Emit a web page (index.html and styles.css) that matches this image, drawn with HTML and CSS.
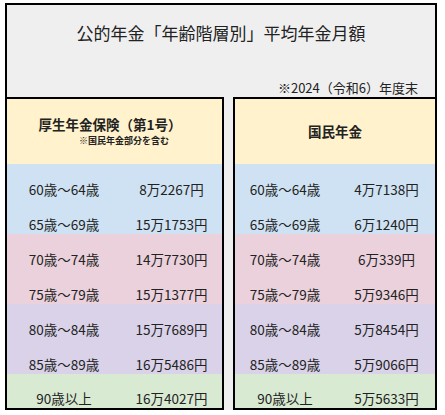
FILE: index.html
```html
<!DOCTYPE html>
<html lang="ja">
<head>
<meta charset="UTF-8">
<meta name="viewport" content="width=device-width, initial-scale=1.0">
<title>公的年金 平均年金月額</title>
<link rel="stylesheet" href="styles.css">
</head>
<body>

<div class="sheet">
    <div class="title-box">
        <h1 class="title">公的年金「年齢階層別」平均年金月額</h1>
        <p class="note">※2024（令和6）年度末</p>
    </div>

    <div class="panels">
        <div class="panel panel-left">
            <div class="head head-left">
                <div class="head-main">厚生年金保険（第1号）</div>
                <div class="head-sub">※国民年金部分を含む</div>
            </div>
            <div class="row blue"><span>60歳～64歳</span><span>8万2267円</span></div>
            <div class="row blue"><span>65歳～69歳</span><span>15万1753円</span></div>
            <div class="row pink"><span>70歳～74歳</span><span>14万7730円</span></div>
            <div class="row pink"><span>75歳～79歳</span><span>15万1377円</span></div>
            <div class="row purple"><span>80歳～84歳</span><span>15万7689円</span></div>
            <div class="row purple"><span>85歳～89歳</span><span>16万5486円</span></div>
            <div class="row green last"><span>90歳以上</span><span>16万4027円</span></div>
        </div>

        <div class="panel panel-right">
            <div class="head head-right">
                <div class="head-main">国民年金</div>
            </div>
            <div class="row blue"><span>60歳～64歳</span><span>4万7138円</span></div>
            <div class="row blue"><span>65歳～69歳</span><span>6万1240円</span></div>
            <div class="row pink"><span>70歳～74歳</span><span>6万339円</span></div>
            <div class="row pink"><span>75歳～79歳</span><span>5万9346円</span></div>
            <div class="row purple"><span>80歳～84歳</span><span>5万8454円</span></div>
            <div class="row purple"><span>85歳～89歳</span><span>5万9066円</span></div>
            <div class="row green last"><span>90歳以上</span><span>5万5633円</span></div>
        </div>
    </div>
</div>

</body>
</html>
```

FILE: styles.css
```css
* {
    box-sizing: border-box;
    margin: 0;
    padding: 0;
}

body {
    background: #fff;
    padding: 3px 0 0 5px;
    font-family: "Noto Sans CJK JP", "Noto Sans", sans-serif;
    color: #222;
}

.sheet {
    width: 432px;
    background: #efefef;
}

.title-box {
    height: 94px;
    border: 2px solid #000;
    border-bottom: none;
    display: flex;
    flex-direction: column;
    justify-content: space-between;
    padding: 17px 17px 1px 0;
}

.title {
    font-size: 17px;
    font-weight: normal;
    line-height: 22px;
    text-align: center;
    padding-left: 17px;
}

.note {
    font-size: 13px;
    line-height: 16px;
    text-align: right;
}

.panels {
    display: flex;
    gap: 9px;
}

.panel {
    border: 2px solid #000;
}

.panel-left {
    width: 219px;
}

.panel-right {
    flex: 1;
}

.head {
    height: 65px;
    background: #fff2cc;
    font-weight: bold;
    display: flex;
    flex-direction: column;
    align-items: center;
}

.head-left {
    padding: 17px 9px 0 0;
}

.head-right {
    justify-content: center;
}

.head-main {
    font-size: 13.5px;
    line-height: 17px;
}

.head-sub {
    font-size: 9px;
    line-height: 12px;
    margin: 2px 0 0 28px;
}

.row {
    height: 35px;
    display: grid;
    align-items: end;
    font-size: 13.5px;
    line-height: 18px;
    padding-bottom: 1px;
    text-align: center;
}

.panel-left .row {
    grid-template-columns: 114px 1fr;
}

.panel-right .row {
    grid-template-columns: 1fr 1fr;
}

.panel-right .row span:last-child {
    padding-left: 3px;
}

.row.last {
    height: 34px;
}

.blue {
    background: #cfe2f3;
}

.pink {
    background: #ead1dc;
}

.purple {
    background: #d9d2e9;
}

.green {
    background: #d9ead3;
}
```
